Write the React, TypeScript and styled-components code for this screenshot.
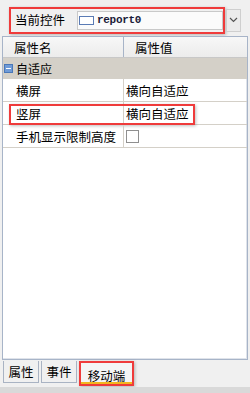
import React from "react";
import styled, { createGlobalStyle } from "styled-components";

const Global = createGlobalStyle`
  html, body { margin: 0; padding: 0; background: #f0f0f0; }
  body { font-family: "Noto Sans CJK SC", "Noto Sans", sans-serif; font-size: 12px; color: #000; }
`;

const Page = styled.div`
  width: 250px;
  height: 393px;
  display: flex;
  flex-direction: column;
  background: #f0f0f0;
  overflow: hidden;
`;

const TopBar = styled.div`
  height: 36px;
  display: flex;
  align-items: center;
  padding: 0 0 0 9px;
  gap: 1px;
`;

const CurrentBox = styled.div`
  width: 216px;
  height: 27px;
  padding: 0 0 0 4px;
  margin-top: 4px;
  border: 2px solid #ef3b3b;
  box-shadow: 1px 1px 3px rgba(0, 0, 0, 0.25);
  display: flex;
  align-items: center;
  box-sizing: border-box;
  flex-shrink: 0;
`;

const Label = styled.span`
  width: 62px;
  font-size: 12.5px;
  line-height: 1;
`;

const Combo = styled.div`
  flex: 1;
  height: 17px;
  background: #fbfbfb;
  border: 1px solid #c9c9c9;
  display: flex;
  align-items: center;
  gap: 3px;
  padding-left: 1px;
`;

const CompIcon = styled.span`
  width: 13px;
  height: 7px;
  border: 1px solid #5a7bb5;
  background: #fff;
`;

const CompName = styled.span`
  font-family: "Liberation Mono", "DejaVu Sans Mono", monospace;
  font-size: 11px;
  font-weight: bold;
  color: #1b1b3a;
  letter-spacing: -0.3px;
`;

const DropBtn = styled.div`
  width: 13px;
  height: 21px;
  margin-top: 4px;
  border: 1px solid #cfcfcf;
  background: #ececec;
  display: flex;
  align-items: center;
  justify-content: center;
  flex-shrink: 0;
`;

const Grid = styled.div`
  flex: 1;
  margin: 0 2px 0 2px;
  border: 1px solid #a7b4c8;
  box-shadow: inset -1px -1px 0 #dfe3ea;
  background: #fff;
  display: flex;
  flex-direction: column;
`;

const HeaderRow = styled.div`
  height: 20px;
  display: grid;
  grid-template-columns: 121px 1fr;
  background: linear-gradient(#f7f7f7, #ececec);
  border-bottom: 1px solid #c8c8c8;
`;

const HeadCell = styled.div<{ $last?: boolean }>`
  display: flex;
  align-items: center;
  padding-left: 11px;
  border-right: ${(p) => (p.$last ? "none" : "1px solid #a7b4c8")};
  font-size: 12.5px;
`;

const GroupRow = styled.div`
  height: 21px;
  background: #d4d0c8;
  display: flex;
  align-items: center;
  gap: 3px;
  padding-left: 1px;
`;

const Minus = styled.span`
  width: 7px;
  height: 7px;
  background: #6f9bd8;
  border: 1px solid #4a78b8;
  display: flex;
  align-items: center;
  justify-content: center;
  &::after {
    content: "";
    width: 5px;
    height: 1px;
    background: #fff;
  }
`;

const Row = styled.div`
  height: 22px;
  display: grid;
  grid-template-columns: 121px 1fr;
  border-bottom: 1px solid #d4d0c8;
  position: relative;
`;

const Cell = styled.div<{ $first?: boolean }>`
  display: flex;
  align-items: center;
  padding-left: ${(p) => (p.$first ? "13px" : "2px")};
  border-right: ${(p) => (p.$first ? "1px solid #d4d0c8" : "none")};
  font-size: 12.5px;
`;

const Check = styled.span`
  width: 11px;
  height: 11px;
  border: 1px solid #8f8f8f;
  background: #fff;
`;

const RowMark = styled.div`
  position: absolute;
  left: 6px;
  top: 2px;
  width: 186px;
  height: 21px;
  border: 2px solid #ef3b3b;
  box-shadow: 1px 1px 3px rgba(0, 0, 0, 0.25);
  box-sizing: border-box;
  pointer-events: none;
`;

const Tabs = styled.div`
  height: 26px;
  display: flex;
  align-items: flex-start;
  padding: 1px 0 0 3px;
  gap: 2px;
`;

const Tab = styled.div<{ $active?: boolean; $w: number }>`
  width: ${(p) => p.$w}px;
  box-sizing: border-box;
  display: flex;
  align-items: center;
  justify-content: center;
  font-size: 12.5px;
  background: ${(p) => (p.$active ? "#f4f4f4" : "#f0f0f0")};
  border: ${(p) => (p.$active ? "2px solid #ef3b3b" : "1px solid #a9b3c3")};
  border-top: ${(p) => (p.$active ? "2px solid #ef3b3b" : "none")};
  box-shadow: ${(p) => (p.$active ? "inset 0 -2px 0 #f2b61f, 1px 1px 3px rgba(0,0,0,0.25)" : "none")};
  height: ${(p) => (p.$active ? "25px" : "22px")};
  padding-top: ${(p) => (p.$active ? "3px" : "0")};
`;

const Bottom = styled.div`
  height: 6px;
  background: #d9d9d9;
`;

export default function App() {
  return (
    <Page>
      <Global />
      <TopBar>
        <CurrentBox>
          <Label>当前控件</Label>
          <Combo>
            <CompIcon />
            <CompName>report0</CompName>
          </Combo>
        </CurrentBox>
        <DropBtn>
          <svg width="9" height="6" viewBox="0 0 9 6">
            <path d="M1 1 L4.5 4.5 L8 1" stroke="#555" strokeWidth="1.2" fill="none" />
          </svg>
        </DropBtn>
      </TopBar>
      <Grid>
        <HeaderRow>
          <HeadCell>属性名</HeadCell>
          <HeadCell $last>属性值</HeadCell>
        </HeaderRow>
        <GroupRow>
          <Minus />
          自适应
        </GroupRow>
        <Row>
          <Cell $first>横屏</Cell>
          <Cell>横向自适应</Cell>
        </Row>
        <Row>
          <Cell $first>竖屏</Cell>
          <Cell>横向自适应</Cell>
          <RowMark />
        </Row>
        <Row>
          <Cell $first>手机显示限制高度</Cell>
          <Cell>
            <Check />
          </Cell>
        </Row>
      </Grid>
      <Tabs>
        <Tab $w={36}>属性</Tab>
        <Tab $w={36}>事件</Tab>
        <Tab $w={55} $active>
          移动端
        </Tab>
      </Tabs>
      <Bottom />
    </Page>
  );
}
